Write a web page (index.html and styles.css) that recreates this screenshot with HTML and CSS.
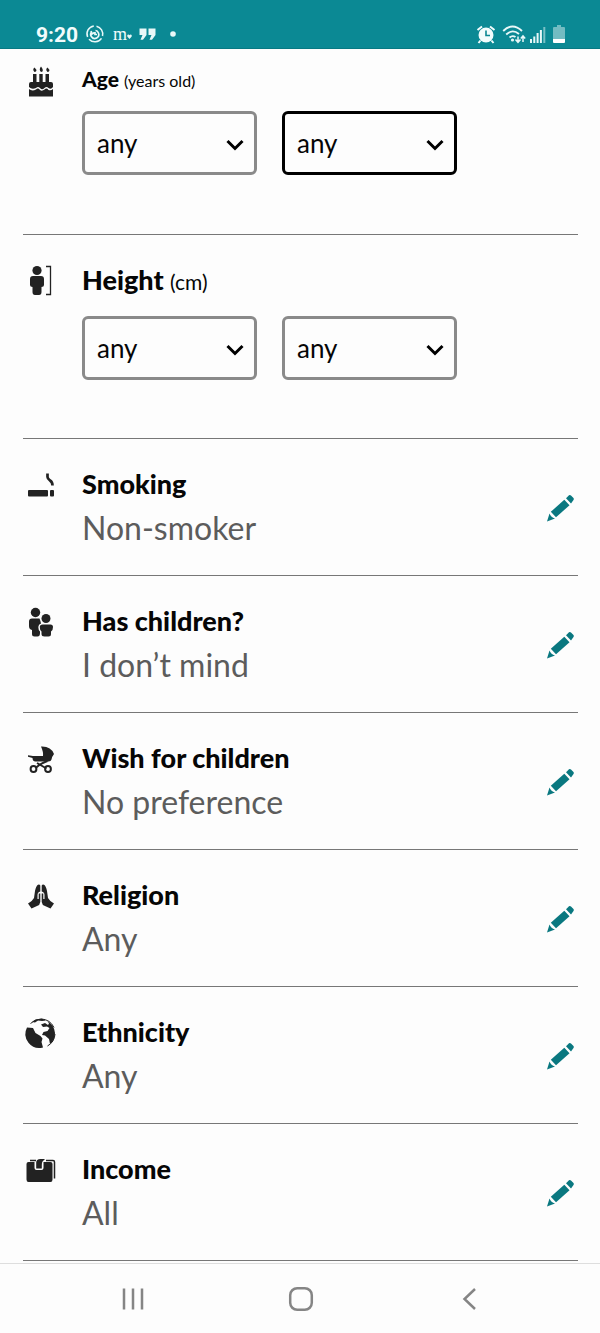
FILE: index.html
```html
<!DOCTYPE html>
<html lang="en">
<head>
<meta charset="utf-8">
<meta name="viewport" content="width=device-width, initial-scale=1">
<title>Search preferences</title>
<link rel="stylesheet" href="styles.css">
</head>
<body>
<svg class="defs" aria-hidden="true">
  <symbol id="pencil" viewBox="0 0 28 28">
    <path d="M0 27.500L2.500 19.500Q4 23.500 8 24.500Z"/>
    <path d="M3.800 17.800L17.300 5.800L22.500 11.300L9 23.300Z"/>
    <path d="M19 4.300L22 1.300Q23 0.500 24 1.500L26.500 4Q27.300 5 26.500 6L24 9.500Z"/>
  </symbol>
  <symbol id="chevron" viewBox="0 0 18 12">
    <path d="M1.500 2L9 9.500L16.500 2" fill="none" stroke="#000" stroke-width="3"/>
  </symbol>
</svg>

<header class="status">
  <div class="status-left">
    <span class="clock">9:20</span>
    <svg class="glyph-sync" viewBox="0 0 18 18" fill="none" stroke="#e8f8f8" stroke-width="1.500">
      <path d="M10.500 1.200A8 8 0 0 1 16.500 11M15.500 13.300A8 8 0 0 1 3 14.200M1.600 12A8 8 0 0 1 7.800 1"/>
      <path d="M6 6.500A4 4 0 1 0 12.500 8Q11.500 5.500 9.500 5.500M5 6L6 9L8.500 7.500M9 7V9.500H11" stroke-width="1.700"/>
    </svg>
    <span class="brand">m<svg class="glyph-heart" viewBox="0 0 5 5"><path d="M2.500 5L0.300 2.500Q-0.200 0.500 1.300 0.500Q2.200 0.500 2.500 1.300Q2.800 0.500 3.700 0.500Q5.200 0.500 4.700 2.500Z"/></svg></span>
    <svg class="glyph-quote" viewBox="0 0 17 12" fill="#e8f8f8">
      <path d="M0.500 0.500H7.500V7L4 11.800H1.500L3.500 7H0.500Z"/>
      <path d="M9.500 0.500H16.500V7L13 11.800H10.500L12.500 7H9.500Z"/>
    </svg>
    <svg class="glyph-dot" viewBox="0 0 6 6" fill="#e8f8f8"><circle cx="3" cy="3" r="2.800"/></svg>
  </div>
  <div class="status-right">
    <svg class="glyph-alarm" viewBox="0 0 20 19">
      <circle cx="10" cy="10" r="7.500" fill="#f2fcfc"/>
      <path d="M1.500 5L6 1.500M14 1.500L18.500 5M4.500 15.500L2.500 18M15.500 15.500L17.500 18" stroke="#f2fcfc" stroke-width="2"/>
      <path d="M10 5.500V10.500H14" fill="none" stroke="#0b8792" stroke-width="1.600"/>
    </svg>
    <svg class="glyph-wifi" viewBox="0 0 24 19" fill="none" stroke="#e8f8f8" stroke-width="1.900">
      <path d="M1.200 6Q10.500 -3 20 6M4.200 9.500Q10.500 3.500 17 9M7.500 12.500Q10.500 10 13.500 12"/>
      <circle cx="10.500" cy="15" r="1.600" fill="#e8f8f8" stroke="none"/>
      <path d="M16 11.500V17M13.500 14.500L16 17.300L18.500 14.500M21 17V11.500M18.800 13.500L21 11L23.200 13.500" stroke-width="1.500"/>
    </svg>
    <svg class="glyph-signal" viewBox="0 0 16 17" fill="#e8f8f8">
      <path d="M0 13H2V17H0ZM3.300 10.500H5.300V17H3.300ZM6.600 7H8.600V17H6.600ZM9.900 4H11.900V17H9.900Z"/>
      <path d="M13.300 1H15.300V17H13.300Z" opacity="0.500"/>
    </svg>
    <svg class="glyph-battery" viewBox="0 0 12 18">
      <path d="M4 0H8V2H11Q12 2 12 3V14H0V3Q0 2 1 2H4Z" fill="#73bcc2"/>
      <path d="M0 14H12V17Q12 18 11 18H1Q0 18 0 17Z" fill="#fff"/>
    </svg>
  </div>
</header>

<main class="prefs">
  <section class="range range-first">
    <svg class="icon" viewBox="0 0 36 32" aria-hidden="true">
      <path d="M11.500 5Q9 2.500 11.500 0.500Q14 2.500 13 4.500ZM18 5Q15.500 2.500 18 -0.500Q20.500 2.500 19.500 4.500ZM24.500 5Q22 2.500 24.500 0.500Q27 2.500 26 4.500Z" transform="translate(0 3)"/>
      <path d="M10 10H13.500V18H16.300V10H19.700V18H22.500V10H26V18H28Q30 18 30 20V23Q28 26 25.500 24Q23.500 22 21.500 24Q19 26.500 17 24Q15 22 13 24Q9 26 6 23V20Q6 18 8 18H10Z"/>
      <path d="M6 25Q9 27.500 13 25.500Q15 23.500 17 26Q19 27.500 21.500 25.500Q23.500 23.500 25.500 26Q28 27 30 25V32.500H6Z"/>
    </svg>
    <div class="body">
      <h2 class="title title-small">Age <small class="unit">(years old)</small></h2>
      <div class="fields">
        <div class="field"><select class="select" aria-label="Minimum age"><option>any</option></select><svg class="chevron" aria-hidden="true"><use href="#chevron"/></svg></div>
        <div class="field"><select class="select select-active" aria-label="Maximum age"><option>any</option></select><svg class="chevron" aria-hidden="true"><use href="#chevron"/></svg></div>
      </div>
    </div>
  </section>

  <section class="range">
    <svg class="icon" viewBox="0 0 36 32" aria-hidden="true">
      <circle cx="14" cy="5.500" r="4.600"/>
      <path d="M10 11H18Q21 11 21 14V20Q21 22 18.500 22V27Q18.500 30 16 30H12Q9.500 30 9.500 27V22Q7 22 7 20V14Q7 11 10 11Z"/>
      <path d="M23 1.500H27.500V29.500H23" fill="none" stroke="#222" stroke-width="1.300"/>
    </svg>
    <div class="body">
      <h2 class="title">Height <small class="unit unit-large">(cm)</small></h2>
      <div class="fields">
        <div class="field"><select class="select" aria-label="Minimum height"><option>any</option></select><svg class="chevron" aria-hidden="true"><use href="#chevron"/></svg></div>
        <div class="field"><select class="select" aria-label="Maximum height"><option>any</option></select><svg class="chevron" aria-hidden="true"><use href="#chevron"/></svg></div>
      </div>
    </div>
  </section>

  <section class="row">
    <svg class="icon" viewBox="0 0 36 32" aria-hidden="true">
      <rect x="5" y="21" width="20" height="6.500" rx="1"/>
      <rect x="27" y="21" width="4" height="6.500" rx="1"/>
      <path d="M24.500 4.500V8Q24.500 9.500 27 11.500Q29.500 13 29.500 16.500" fill="none" stroke="#222" stroke-width="2.700"/>
    </svg>
    <div class="body"><h2 class="title">Smoking</h2><p class="value">Non-smoker</p></div>
    <button class="edit" type="button" aria-label="Edit smoking"><svg class="pencil"><use href="#pencil"/></svg></button>
  </section>

  <section class="row">
    <svg class="icon" viewBox="0 0 36 32" aria-hidden="true">
      <circle cx="12.500" cy="6.500" r="4.700"/>
      <circle cx="23" cy="12.500" r="4.500"/>
      <path d="M9 12.500H16.500Q17.500 15 18 17.500Q15.500 18 15.300 21Q15.300 24 17 25.500V27Q17 30.500 14.500 30.500H11.500Q9 30.500 9 28V24Q6 23.500 6 20V15.500Q6 12.500 9 12.500Z"/>
      <path d="M19.500 18.500H27.500Q30 18.500 30 21Q30 24.500 28 25.500V28Q28 30.500 25.500 30.500H21.500Q18.500 30.500 18.500 28V25.500Q16.800 24.500 16.800 21Q16.800 18.500 19.500 18.500Z"/>
    </svg>
    <div class="body"><h2 class="title">Has children?</h2><p class="value">I don’t mind</p></div>
    <button class="edit" type="button" aria-label="Edit has children"><svg class="pencil"><use href="#pencil"/></svg></button>
  </section>

  <section class="row">
    <svg class="icon" viewBox="0 0 36 32" aria-hidden="true">
      <path d="M18 3.500Q28 3 31 11Q29 13.500 28.500 16.500Q28 18.500 25.500 18.500H12Q9.500 18 9.500 15L5 13.800V12.300L10 13H20Q20.500 9 18 3.500Z"/>
      <path d="M14 20L23.500 25.500M24.500 18Q18 20 12.500 25" fill="none" stroke="#222" stroke-width="2"/>
      <g fill="none" stroke="#222" stroke-width="2"><circle cx="10.500" cy="26" r="2.900"/><circle cx="25" cy="26" r="2.900"/></g>
    </svg>
    <div class="body"><h2 class="title">Wish for children</h2><p class="value">No preference</p></div>
    <button class="edit" type="button" aria-label="Edit wish for children"><svg class="pencil"><use href="#pencil"/></svg></button>
  </section>

  <section class="row">
    <svg class="icon" viewBox="0 0 36 32" aria-hidden="true">
      <path d="M17.300 5.500V11.500Q14.500 12 14.500 15V19H15.700V13.500H17.300V22Q17 25 14 26L8.500 28.500L5 23.500Q9.500 21 11 18L12 11Q13 6 15 4.800Q16.500 4 17.300 5.500Z"/>
      <path d="M18.700 5.500V11.500Q21.500 12 21.500 15V19H20.300V13.500H18.700V22Q19 25 22 26L27.500 28.500L31 23.500Q26.500 21 25 18L24 11Q23 6 21 4.800Q19.500 4 18.700 5.500Z"/>
    </svg>
    <div class="body"><h2 class="title">Religion</h2><p class="value">Any</p></div>
    <button class="edit" type="button" aria-label="Edit religion"><svg class="pencil"><use href="#pencil"/></svg></button>
  </section>

  <section class="row">
    <svg class="icon" viewBox="0 0 36 32" aria-hidden="true">
      <path d="M4 10.500L10 11L12.500 16L17.500 19L19.500 21.500L18.500 25L20 30.500A14 14 0 0 1 4 10.500Z"/>
      <path d="M9 5Q13 1.500 19 1.800L23 3.500L19 4L15 3.500L12 5.500Z"/>
      <path d="M24.500 4Q31.500 8.500 32 16Q32 23 27 27L26 22L22 18.500L19 18L20.500 15L24.500 14L26.500 11L24 9.500L20 10L18 7.500L22 6L25 8L26 6.500Z"/>
      <path d="M7.500 6.500Q12 2 18.500 2Q27 2.500 31 10.500M32 17Q31.500 25 24.500 29" fill="none" stroke="#222"/>
    </svg>
    <div class="body"><h2 class="title">Ethnicity</h2><p class="value">Any</p></div>
    <button class="edit" type="button" aria-label="Edit ethnicity"><svg class="pencil"><use href="#pencil"/></svg></button>
  </section>

  <section class="row">
    <svg class="icon" viewBox="0 0 36 32" aria-hidden="true">
      <path d="M5.500 8H11.500V14Q11.500 16 13.500 16H18.500Q20.500 16 20.500 14V8H27.500Q29.500 8 29.500 10V25.500Q29.500 28 27.500 28H5.500Q3.500 28 3.500 25.500V10Q3.500 8 5.500 8Z"/>
      <path d="M13.200 14.500V8.500Q13.200 5 17.500 5H22L19.500 7.500Q18.800 8.500 18.800 11V14.500Z"/>
      <path d="M7 6.500H13M23 6.500H30Q31.500 6.500 31.500 8V24.500" fill="none" stroke="#222" stroke-width="1.500"/>
    </svg>
    <div class="body"><h2 class="title">Income</h2><p class="value">All</p></div>
    <button class="edit" type="button" aria-label="Edit income"><svg class="pencil"><use href="#pencil"/></svg></button>
  </section>
</main>

<nav class="navbar" aria-label="System">
  <button class="nav-button" type="button" aria-label="Recent apps"><svg class="nav-icon" viewBox="0 0 24 24"><path d="M3 1.500V22.500M12 1.500V22.500M21 1.500V22.500"/></svg></button>
  <button class="nav-button" type="button" aria-label="Home"><svg class="nav-icon" viewBox="0 0 24 24"><rect x="1.200" y="1.200" width="21.600" height="21.600" rx="7"/></svg></button>
  <button class="nav-button" type="button" aria-label="Back"><svg class="nav-icon" viewBox="0 0 24 24"><path d="M18 2L7.500 12L18 22"/></svg></button>
</nav>
</body>
</html>
```
FILE: styles.css
```css
* {
  box-sizing: border-box;
}

body {
  display: flex;
  flex-direction: column;
  min-height: 100vh;
  margin: 0;
  background: #fdfdfd;
  color: #060606;
  font-family: Lato, "Liberation Sans", sans-serif;
}

svg {
  display: block;
  overflow: visible;
}

.defs {
  position: absolute;
  width: 0;
  height: 0;
}

/* Status bar */
.status {
  display: flex;
  justify-content: space-between;
  height: 49px;
  padding: 20px 35px 0 36px;
  background: #0b8994;
  border-bottom: 1px solid #087983;
  color: #f2fcfc;
}

.status-left,
.status-right {
  display: flex;
  align-items: center;
  height: 28px;
}

.clock {
  width: 50px;
  padding-top: 1px;
  font: 700 21px/28px Roboto, sans-serif;
}

.glyph-sync {
  width: 18px;
  height: 18px;
}

.brand {
  display: flex;
  align-items: center;
  width: 26px;
  margin-left: 9px;
  font: 400 18px/24px "Liberation Serif", serif;
}

.glyph-heart {
  width: 5px;
  height: 5px;
  margin-top: 5px;
  fill: #e8f8f8;
}

.glyph-quote {
  width: 17px;
  height: 12px;
}

.glyph-dot {
  width: 6px;
  height: 6px;
  margin-left: 14px;
}

.glyph-alarm {
  width: 20px;
  height: 19px;
}

.glyph-wifi {
  width: 24px;
  height: 19px;
  margin-left: 6px;
}

.glyph-signal {
  width: 16px;
  height: 17px;
  margin-left: 4px;
}

.glyph-battery {
  width: 12px;
  height: 18px;
  margin-left: 7px;
}

/* Preference list */
.prefs {
  flex: 1;
  padding: 0 22px 0 23px;
}

.range,
.row {
  display: flex;
  padding: 29px 0 27px;
  border-bottom: 1px solid #777;
}

.range {
  padding-bottom: 58px;
}

.range-first {
  padding-top: 14px;
  padding-bottom: 59px;
}

.icon {
  flex: none;
  width: 36px;
  height: 32px;
  margin: 1px 23px 0 0;
  fill: #222;
}

.body {
  flex: 1;
  min-width: 0;
}

.title {
  margin: 0;
  font-size: 27px;
  font-weight: 900;
  line-height: 32px;
}

.title-small {
  font-size: 21px;
}

.unit {
  font-size: 16px;
  font-weight: 400;
  line-height: 1;
}

.unit-large {
  font-size: 21px;
}

.value {
  margin: 8px 0 0;
  color: #5c5c5c;
  font-size: 32px;
  line-height: 40px;
}

.fields {
  display: flex;
  gap: 25px;
  margin-top: 20px;
}

.range-first .fields {
  margin-top: 16px;
}

.field {
  display: grid;
  flex: 0 1 175px;
  align-items: center;
}

.select {
  grid-area: 1 / 1;
  width: 100%;
  height: 64px;
  padding: 0 12px;
  appearance: none;
  background: transparent;
  border: 3px solid #8a8a8a;
  border-radius: 6px;
  color: #060606;
  font: 400 26px Lato, sans-serif;
}

.select-active {
  border-color: #000;
}

.chevron {
  grid-area: 1 / 1;
  justify-self: end;
  width: 18px;
  height: 12px;
  margin: 4px 13px 0 0;
  pointer-events: none;
}

.edit {
  align-self: center;
  margin-right: 3px;
  padding: 0;
  background: none;
  border: 0;
}

.pencil {
  width: 28px;
  height: 28px;
  fill: #0a7880;
}

/* System navigation */
.navbar {
  display: grid;
  grid-template-columns: repeat(3, 1fr);
  height: 70px;
  padding: 0 47px 0 49px;
  border-top: 1px solid #dedede;
}

.nav-button {
  display: grid;
  place-items: center;
  padding: 0;
  background: none;
  border: 0;
}

.nav-icon {
  width: 24px;
  height: 24px;
  fill: none;
  stroke: #858585;
  stroke-width: 2.5;
}
```
